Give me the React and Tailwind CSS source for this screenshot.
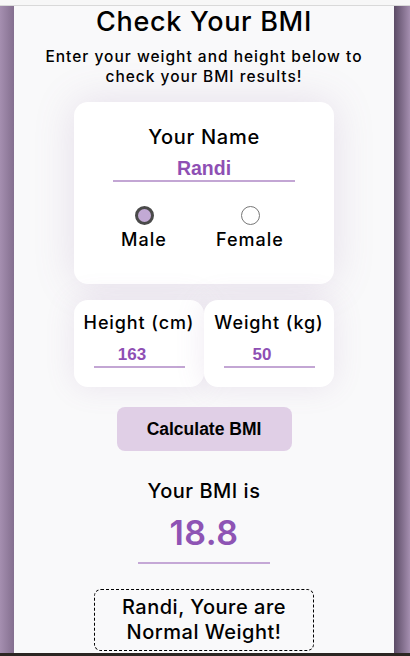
import { useState } from "react";

const font = { fontFamily: "Inter, 'Noto Sans', sans-serif" };
const arial = { fontFamily: "'Liberation Sans', Arial, sans-serif" };

const Radio = ({ checked }) =>
    checked ? (
        <span className="w-[19px] h-[19px] rounded-full border-[3px] border-[#4a4a4a] bg-[#c2a9d4]" />
    ) : (
        <span className="w-[19px] h-[19px] rounded-full border-[1.5px] border-[#777] bg-white" />
    );

export default function App() {
    const [name, setName] = useState("Randi");
    const [gender, setGender] = useState("male");
    const [height, setHeight] = useState("163");
    const [weight, setWeight] = useState("50");

    return (
        <div className="w-[410px] h-[656px] flex flex-col overflow-hidden bg-[#2b2622]" style={font}>
            {/* top strip */}
            <div className="h-[6px] shrink-0 bg-[#f7f7f7] border-b border-[#d9d9d9]" />

            <div className="flex flex-1 min-h-0">
                <div className="w-[14px] shrink-0 bg-gradient-to-r from-[#a58fb0] to-[#846f8f]" />

                {/* main panel */}
                <div className="flex-1 bg-[#f9f9fa] flex flex-col items-center text-black">
                    <h1 className="text-[27px] leading-[30px] font-medium tracking-[0.7px] mt-[1px]">
                        Check Your BMI
                    </h1>
                    <p className="mt-[10px] text-[15.5px] leading-[20px] font-medium text-center tracking-[1px]">
                        Enter your weight and height below to<br />check your BMI results!
                    </p>

                    {/* name card */}
                    <div className="mt-[15px] w-[260px] h-[182px] bg-white rounded-[14px] shadow-[0_0_40px_rgba(140,100,160,0.18)] flex flex-col items-center">
                        <div className="mt-[23px] text-[20px] leading-[24px] font-medium tracking-[0.7px]">Your Name</div>
                        <input
                            value={name}
                            onChange={(e) => setName(e.target.value)}
                            className="mt-[9px] w-[182px] h-[24px] text-center text-[19.5px] font-bold text-[#8e4fb4] bg-transparent outline-none border-b-2 border-[#c3a6d4]"
                            style={arial}
                        />
                        <div className="mt-[24px] mr-[10px] flex gap-[42px]">
                            <label className="flex flex-col items-center w-[60px] cursor-pointer" onClick={() => setGender("male")}>
                                <Radio checked={gender === "male"} />
                                <span className="mt-[4px] text-[18px] leading-[22px] font-medium tracking-[1px]">Male</span>
                            </label>
                            <label className="flex flex-col items-center w-[68px] cursor-pointer" onClick={() => setGender("female")}>
                                <Radio checked={gender === "female"} />
                                <span className="mt-[4px] text-[18px] leading-[22px] font-medium tracking-[1px]">Female</span>
                            </label>
                        </div>
                    </div>

                    {/* height / weight */}
                    <div className="mt-[16px] flex">
                        <div className="w-[130px] h-[87px] bg-white rounded-[14px] shadow-[0_0_30px_rgba(140,100,160,0.14)] flex flex-col items-center">
                            <div className="mt-[12px] text-[18px] leading-[22px] font-medium tracking-[0.9px]">Height (cm)</div>
                            <input
                                value={height}
                                onChange={(e) => setHeight(e.target.value)}
                                className="mt-[10px] w-[91px] h-[24px] pr-[14px] text-center text-[17px] font-bold text-[#8e4fb4] bg-transparent outline-none border-b-2 border-[#c3a6d4]"
                                style={arial}
                            />
                        </div>
                        <div className="w-[130px] h-[87px] bg-white rounded-[14px] shadow-[0_0_30px_rgba(140,100,160,0.14)] flex flex-col items-center">
                            <div className="mt-[12px] text-[18px] leading-[22px] font-medium tracking-[0.9px]">Weight (kg)</div>
                            <input
                                value={weight}
                                onChange={(e) => setWeight(e.target.value)}
                                className="mt-[10px] w-[91px] h-[24px] pr-[14px] text-center text-[17px] font-bold text-[#8e4fb4] bg-transparent outline-none border-b-2 border-[#c3a6d4]"
                                style={arial}
                            />
                        </div>
                    </div>

                    <button
                        className="mt-[20px] w-[175px] h-[44px] rounded-[8px] bg-[#e0cfe6] text-[17.5px] font-bold text-black"
                        style={arial}
                    >
                        Calculate BMI
                    </button>

                    <div className="mt-[28px] text-[20px] leading-[24px] font-medium tracking-[0.5px]">Your BMI is</div>
                    <div className="mt-[10px] w-[132px] pb-[9px] text-center text-[34px] leading-[40px] font-semibold tracking-[0.5px] text-[#8e54b4] border-b-2 border-[#c5a8d6]">
                        18.8
                    </div>

                    <div className="mt-[25px] w-[220px] h-[62px] border border-dashed border-black rounded-[7px] flex items-center justify-center text-center text-[20px] leading-[25px] font-medium tracking-[0.5px]">
                        Randi, Youre are<br />Normal Weight!
                    </div>
                </div>

                <div className="w-[16px] shrink-0 bg-gradient-to-r from-[#5c4c66] to-[#a58fb0]" />
            </div>

            <div className="h-[3px] shrink-0 bg-[#2b2622]" />
        </div>
    );
}
